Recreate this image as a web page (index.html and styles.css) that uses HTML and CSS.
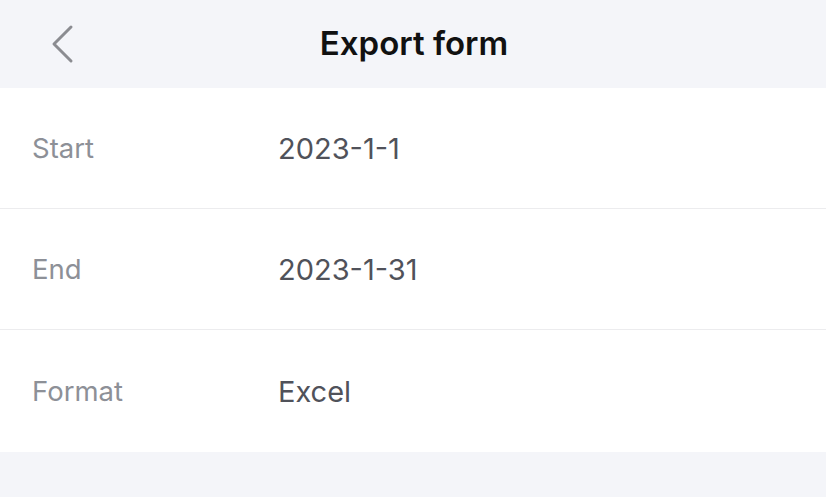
FILE: index.html
```html
<!DOCTYPE html>
<html>
<head>
<meta charset="utf-8">
<link rel="stylesheet" href="styles.css">
</head>
<body>
<div class="page">
  <header class="navbar">
    <div class="back">
      <svg width="24" height="40" viewBox="0 0 24 40"><polyline points="20,3 3,20 20,37" fill="none" stroke="#8b8c91" stroke-width="3" stroke-linecap="round" stroke-linejoin="round"/></svg>
    </div>
    <h1 class="title">Export form</h1>
  </header>
  <div class="list">
    <div class="row"><span class="label">Start</span><span class="value">2023-1-1</span></div>
    <div class="row"><span class="label">End</span><span class="value">2023-1-31</span></div>
    <div class="row"><span class="label">Format</span><span class="value">Excel</span></div>
  </div>
</div>
</body>
</html>
```

FILE: styles.css
```css
html, body {
  margin: 0;
  padding: 0;
  background: #f4f5f9;
  font-family: Inter, "Liberation Sans", sans-serif;
}
.page {
  width: 826px;
  height: 497px;
  background: #f4f5f9;
}
.navbar {
  position: relative;
  height: 88px;
  display: flex;
  align-items: center;
  justify-content: center;
}
.back {
  position: absolute;
  left: 51px;
  top: 24px;
  width: 24px;
  height: 40px;
}
.back svg { display: block; }
.title {
  margin: 0 0 2px 2px;
  font-size: 33px;
  font-weight: 600;
  color: #111;
}
.list {
  background: #fff;
}
.row {
  height: 120px;
  display: flex;
  align-items: center;
  padding-left: 32px;
  border-bottom: 1px solid #ececee;
}
.row:last-child {
  border-bottom: none;
  height: 122px;
}
.label {
  width: 246px;
  font-size: 27.5px;
  color: #8d9097;
}
.value {
  font-size: 29px;
  color: #50525a;
}
```
